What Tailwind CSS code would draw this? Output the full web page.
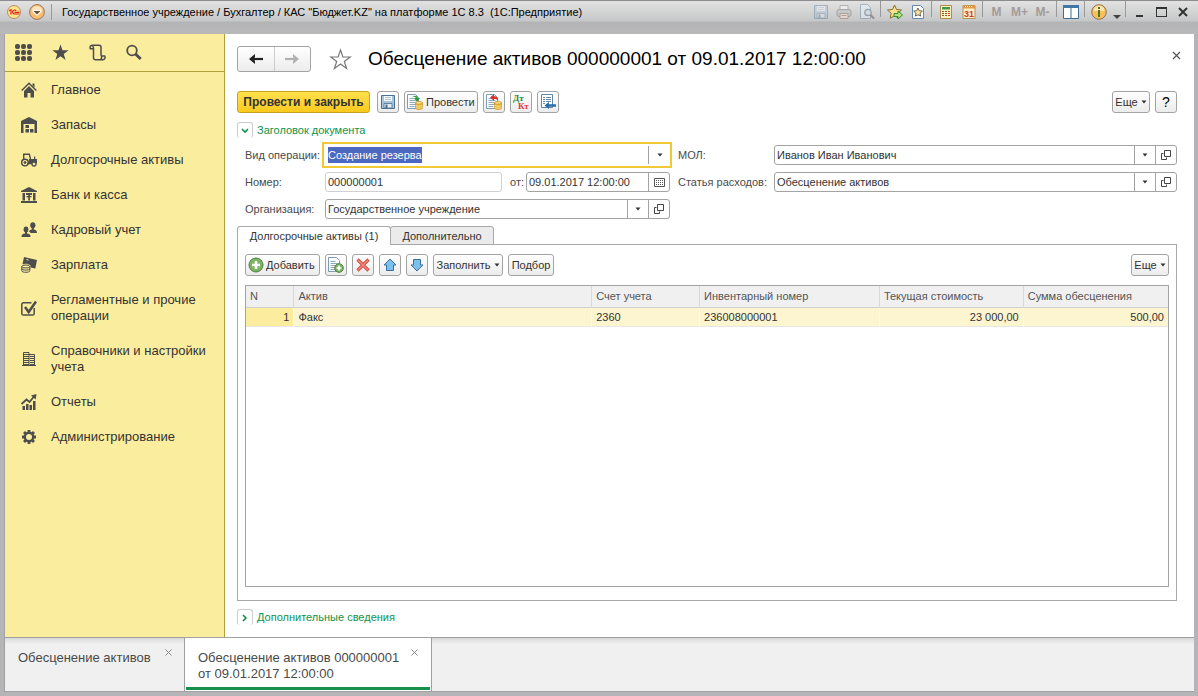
<!DOCTYPE html>
<html lang="ru">
  <head>
    <meta charset="UTF-8" />
    <meta name="viewport" content="width=device-width, initial-scale=1.0" />
    <title>Обесценение активов</title>
    <script src="https://cdn.jsdelivr.net/npm/@tailwindcss/browser@4"></script>
  </head>
  <body
    class="h-screen flex flex-col bg-[#b5b5b7] px-1 pb-1 font-['Liberation_Sans',Arial,sans-serif] text-[11px] leading-4 text-[#333] overflow-hidden"
  >
    <!-- Shared icons -->
    <svg class="hidden">
      <symbol id="down" viewBox="0 0 6 4"><path d="M0.500 0.500h5L3 3.500z" fill="#333" /></symbol>
      <symbol id="open" viewBox="0 0 10 10">
        <path d="M3.500 0.500h6v6h-6zM2.500 3.500h-2v6h5v-2" fill="none" stroke="#444" />
      </symbol>
      <symbol id="coins" viewBox="0 0 8 9">
        <path d="M0.500 1.800v5.400c0 1.600 7 1.600 7 0V1.800z" fill="#e9b63a" stroke="#c68f1c" stroke-width=".7" />
        <ellipse cx="4" cy="1.800" rx="3.500" ry="1.400" fill="#fbe08a" stroke="#c68f1c" stroke-width=".7" />
        <path d="M0.500 4c0 1.600 7 1.600 7 0M0.500 6c0 1.600 7 1.600 7 0" fill="none" stroke="#fff0b0" stroke-width=".7" />
      </symbol>
      <symbol id="sheet" viewBox="0 0 12 15">
        <path d="M0.500 0.500h8l3 3v11h-11z" fill="#fff" stroke="#7d9cb5" />
        <path d="M2.500 4.500h5M2.500 6.500h7M2.500 8.500h7M2.500 10.500h7M2.500 12.500h5" stroke="#8fa9bd" />
      </symbol>
      <symbol id="disk" viewBox="0 0 16 16">
        <path d="M1.500 1.500h13v13h-13z" fill="#a9c4d9" stroke="#4b7191" />
        <path d="M4 2h8v5H4z" fill="#f4f8fb" />
        <path d="M5 3.500h6M5 5.500h6" stroke="#b4c6d4" />
        <path d="M4 9.500h8V14H4z" fill="#e6edf2" stroke="#4b7191" stroke-width=".8" />
        <path d="M5.500 10.500h2V14h-2z" fill="#4b7191" />
      </symbol>
    </svg>

    <!-- Title bar -->
    <header
      class="-mx-1 h-[34px] shrink-0 border-t border-[#8c8c8e] bg-[linear-gradient(#e2e2e2_0px,#c6c7c8_20px,#b3b4b6_21px,#b9b9bb_34px)] px-1 text-black"
    >
      <div class="flex h-[22px] items-center">
        <button aria-label="1С" class="ml-[3px]">
          <svg width="14" height="14" viewBox="0 0 14 14">
            <circle cx="7" cy="7" r="6.500" fill="#fde48a" stroke="#b98e6c" />
            <path d="M2 5.800L4 4.800V9.500M9.200 5.800a2 2 0 1 0 -1.700 3.200h5M7.500 7.300h5" fill="none" stroke="#d8221c" stroke-width="1.200" />
          </svg>
        </button>
        <button aria-label="Главное меню" class="ml-2">
          <svg width="16" height="16" viewBox="0 0 16 16">
            <circle cx="8" cy="8" r="7.400" fill="#f8bf71" stroke="#97775a" />
            <path d="M2.500 6a5.800 5.800 0 0 1 11 0z" fill="#fde3b8" />
            <path d="M3.500 6h9v2L8 11.800 3.500 8z" fill="#fff" />
            <path d="M4.500 7h7L8 10.500z" fill="#6b4c30" />
          </svg>
        </button>
        <span class="ml-[6px] h-4 w-px bg-[#999]"></span>
        <h2 class="ml-[10px] flex-1 whitespace-nowrap">
          Государственное учреждение / Бухгалтер / КАС "Бюджет.KZ" на платформе 1С 8.3&nbsp; (1С:Предприятие)
        </h2>

        <div class="flex h-full items-center">
          <button aria-label="Сохранить" class="flex w-[23px] justify-center opacity-40">
            <svg width="16" height="16"><use href="#disk" /></svg>
          </button>
          <button aria-label="Печать" class="flex w-[23px] justify-center opacity-50">
            <svg width="16" height="16" viewBox="0 0 16 16">
              <path d="M4 1.500h8v5H4z" fill="#fff" stroke="#888" />
              <rect x="1" y="5.500" width="14" height="7" rx="2" fill="#bbb" stroke="#777" />
              <path d="M4 9.500h8v5H4z" fill="#f3e5d8" stroke="#98705a" />
              <path d="M5.500 11.500h5" stroke="#98705a" />
            </svg>
          </button>
          <button aria-label="Предварительный просмотр" class="flex w-[23px] justify-center opacity-50">
            <svg width="16" height="16" viewBox="0 0 16 16">
              <path d="M1.500 0.500h7l3 3v11h-10z" fill="#eef3f7" stroke="#6d8ea8" />
              <circle cx="9" cy="8.500" r="3.200" fill="#cfe1ef" stroke="#5b7288" stroke-width="1.300" />
              <path d="M11.500 11l3.500 3.500" stroke="#6b4c40" stroke-width="2" />
            </svg>
          </button>
          <span class="mx-[2px] h-4 w-px self-start bg-[#999]"></span>
          <button aria-label="Добавить в избранное" class="flex w-[23px] justify-center">
            <svg width="16" height="16" viewBox="0 0 16 16">
              <path d="M7.500 1l2 4.500 5 .5-3.700 3.300 1 4.900-4.300-2.500-4.300 2.500 1-4.900L.5 6l5-.5z" fill="#f8e08c" stroke="#8a6d2e" />
              <path d="M7 9.500h4V7l4.500 4-4.500 4v-2.500H7z" fill="#b9e07f" stroke="#2f8f2a" />
            </svg>
          </button>
          <button aria-label="Избранное" class="flex w-[23px] justify-center">
            <svg width="14" height="16" viewBox="0 0 14 16">
              <path d="M1.500 1.500h8l3 3v10h-11z" fill="#fff" stroke="#6489a8" />
              <path d="M7 4l1.300 2.700 3 .4-2.200 2 .5 3L7 10.700l-2.600 1.400.5-3-2.200-2 3-.4z" fill="#fbe39b" stroke="#444" stroke-width=".8" />
            </svg>
          </button>
          <span class="mx-[2px] h-4 w-px self-start bg-[#999]"></span>
          <button aria-label="Калькулятор" class="flex w-[23px] justify-center">
            <svg width="14" height="16" viewBox="0 0 14 16">
              <path d="M1.500 1.500h11v13h-11z" fill="#fdf3c4" stroke="#b08b4a" />
              <path d="M3 3h8v2.500H3z" fill="#3f9a4c" />
              <path d="M3 7.500h8M3 9.500h8M3 11.500h8" stroke="#8a5a3a" stroke-dasharray="2 1" />
              <path d="M9 7.500h2M9 9.500h2M9 11.500h2" stroke="#d23c22" />
            </svg>
          </button>
          <button aria-label="Календарь" class="flex w-[23px] justify-center">
            <svg width="14" height="16" viewBox="0 0 14 16">
              <path d="M1 1.500h12v13H1z" fill="#fdf0c6" stroke="#b3915a" />
              <path d="M1 1.500h12v3H1z" fill="#e29a4a" />
              <path d="M3 2.500h8" stroke="#fff" stroke-dasharray="1 1" />
              <text x="7" y="13" text-anchor="middle" font-size="9" font-weight="bold" fill="#d23c22">31</text>
            </svg>
          </button>
          <span class="mx-[2px] h-4 w-px self-start bg-[#999]"></span>
          <button class="w-[23px] text-center text-xs font-bold text-[#a39c99]">M</button>
          <button class="w-[23px] text-center text-xs font-bold text-[#a39c99]">M+</button>
          <button class="w-[23px] text-center text-xs font-bold text-[#a39c99]">M-</button>
          <span class="mx-[2px] h-4 w-px self-start bg-[#999]"></span>
          <button aria-label="Панели" class="flex w-[23px] justify-center">
            <svg width="16" height="14" viewBox="0 0 16 14">
              <path d="M0.500 0.500h15v13H0.500z" fill="#fff" stroke="#3f6f96" />
              <path d="M0 0h16v3H0z" fill="#3f78a8" />
              <path d="M8 3v10" stroke="#3f6f96" />
            </svg>
          </button>
          <span class="mx-[2px] h-4 w-px self-start bg-[#999]"></span>
          <button aria-label="Справка" class="flex w-[23px] justify-center">
            <svg width="16" height="16" viewBox="0 0 16 16">
              <circle cx="8" cy="8" r="7.300" fill="#f9bf5c" stroke="#8c7350" />
              <path d="M2.500 7a5.500 5.500 0 0 1 11 0z" fill="#fde3b0" />
              <path d="M7 3h2v2H7zM7 6h2v7H7z" fill="#4c7a24" />
            </svg>
          </button>
          <button aria-label="Ещё" class="flex h-full w-[13px] items-end justify-center pb-1">
            <svg width="8" height="4" viewBox="0 0 8 4"><path d="M0 0h8L4 4z" fill="#444" /></svg>
          </button>
          <span class="mx-[2px] h-4 w-px self-start bg-[#999]"></span>
          <button aria-label="Свернуть" class="flex h-full w-[22px] items-end justify-center pb-[6px]">
            <span class="h-[2px] w-[7px] bg-[#333]"></span>
          </button>
          <button aria-label="Развернуть" class="flex w-[22px] justify-center">
            <span class="h-[10px] w-[11px] border border-t-2 border-[#333]"></span>
          </button>
          <button aria-label="Закрыть" class="flex w-[22px] justify-center">
            <svg width="10" height="10" viewBox="0 0 10 10"><path d="M1 1l8 8M9 1l-8 8" stroke="#333" stroke-width="2" /></svg>
          </button>
        </div>
      </div>
    </header>

    <div class="flex min-h-0 flex-1 border-l border-[#a3a3a5]">
      <!-- Sections panel -->
      <aside class="w-[220px] shrink-0 border-r border-[#b0a03c] bg-[#fbed9e]">
        <div class="flex h-[38px] items-center gap-5 border-b border-[#b0a03c] pl-[10px]">
          <button aria-label="Меню функций">
            <svg width="17" height="17" viewBox="0 0 17 17" fill="#4d4d4d">
              <rect width="5" height="5" rx="2" /><rect x="6" width="5" height="5" rx="2" /><rect x="12" width="5" height="5" rx="2" />
              <rect y="6" width="5" height="5" rx="2" /><rect x="6" y="6" width="5" height="5" rx="2" /><rect x="12" y="6" width="5" height="5" rx="2" />
              <rect y="12" width="5" height="5" rx="2" /><rect x="6" y="12" width="5" height="5" rx="2" /><rect x="12" y="12" width="5" height="5" rx="2" />
            </svg>
          </button>
          <button aria-label="Избранное">
            <svg width="17" height="17" viewBox="0 0 17 17" fill="#4d4d4d">
              <path d="M8.500 0.500l2 5.700h6.200l-5 3.700 1.900 6.100-5.100-3.700L3.400 16l1.900-6.100-5-3.700h6.200z" />
            </svg>
          </button>
          <button aria-label="История">
            <svg width="17" height="17" viewBox="0 0 17 17" fill="none" stroke="#4d4d4d" stroke-width="1.500">
              <path d="M4.500 4.700H1.300C.5 2 2 1.200 3.500 1.200H10c1.200 0 2 .8 2 2v8.500M3.300 1.500c1.200.8 1.200 2 1.200 3.200V14c0 1 .8 1.700 2 1.700h7.500c1.700 0 2.500-2 1.700-3.700H12.500c.3 1.500.3 3-1 3.700" />
            </svg>
          </button>
          <button aria-label="Поиск">
            <svg width="16" height="17" viewBox="0 0 16 17" fill="none" stroke="#4d4d4d">
              <circle cx="6" cy="6.500" r="4.800" stroke-width="1.800" />
              <path d="M9.500 10l5.200 5" stroke-width="3" />
            </svg>
          </button>
        </div>

        <nav class="flex flex-col gap-px pt-px pl-4 text-[13px] text-[#333]">
          <a href="#" class="flex items-center gap-[14px] py-[9px]">
            <svg class="shrink-0" width="16" height="16" viewBox="0 0 16 16" fill="#4d4d4d">
              <path d="M8 4l5 5v6.500H9.500V11h-3v4.500H3V9zM11.500 1.500h2v4l-2-2z" />
              <path d="M0.700 8.500L8 1.300l7.300 7.200" fill="none" stroke="#4d4d4d" stroke-width="1.500" />
            </svg>
            Главное
          </a>
          <a href="#" class="flex items-center gap-[14px] py-[9px]">
            <svg class="shrink-0" width="16" height="16" viewBox="0 0 16 16" fill="#4d4d4d">
              <path d="M0 4l8-4 8 4v12h-2.500V7h-11v9H0z" />
              <path d="M4.500 8H8v3H4.500zM4.500 12H8v3.500H4.500zM9 12h3.500v3.500H9z" />
            </svg>
            Запасы
          </a>
          <a href="#" class="flex items-center gap-[14px] py-[9px]">
            <svg class="shrink-0" width="16" height="16" viewBox="0 0 16 16" fill="none" stroke="#4d4d4d">
              <path d="M2.700 7V2.200h5.600L9.500 7" stroke-width="1.400" />
              <path d="M8 7h8v4.500H8zM13 4.500h1.200V7H13z" fill="#4d4d4d" stroke="none" />
              <circle cx="4" cy="10.500" r="3.300" stroke-width="1.500" />
              <circle cx="4" cy="10.500" r="1" fill="#4d4d4d" />
              <circle cx="13" cy="12" r="2" fill="#fbed9e" stroke-width="1.300" />
              <path d="M6 11.500h5" stroke-width="1.500" />
            </svg>
            Долгосрочные активы
          </a>
          <a href="#" class="flex items-center gap-[14px] py-[9px]">
            <svg class="shrink-0" width="16" height="16" viewBox="0 0 16 16" fill="#4d4d4d">
              <path d="M0 5V4l8-4 8 4v1zM1.500 6H4v7.500H1.500zM12 6h2.500v7.500H12zM0 14h16v2H0zM5 6h6v2H5zM5.500 9h5v1.300h-5zM7.200 7h1.700v6.500H7.200z" />
            </svg>
            Банк и касса
          </a>
          <a href="#" class="flex items-center gap-[14px] py-[9px]">
            <svg class="shrink-0" width="16" height="16" viewBox="0 0 16 16" fill="#4d4d4d">
              <ellipse cx="5" cy="7.500" rx="2.400" ry="3" /><path d="M4 9h2v2.500c2 0 3.500.8 3.500 3.500h-9c0-2.700 1.500-3.500 3.500-3.500z" />
              <ellipse cx="11.800" cy="3.300" rx="2.600" ry="3.100" /><path d="M10.800 5h2v2.500c2 .3 3.200 1.200 3.200 3.500H9.500c-.5-1-1.300-1.300-1.500-1.500.5-1.300 1.600-1.700 2.800-2z" />
            </svg>
            Кадровый учет
          </a>
          <a href="#" class="flex items-center gap-[14px] py-[9px]">
            <svg class="shrink-0" width="16" height="16" viewBox="0 0 16 16" fill="#4d4d4d">
              <path d="M3 0L16 3l-1.700 8.500L9.500 10.500V8.500C7.500 6.500 4 6.500 1.500 7.300z" />
              <path d="M5.500 2.500l2 .5" stroke="#fbed9e" />
              <ellipse cx="4.800" cy="9.500" rx="4" ry="1.500" fill="#fbed9e" stroke="#4d4d4d" />
              <path d="M.8 9.500v4.300c0 2 8 2 8 0V9.500M.8 11.600c0 2 8 2 8 0" fill="none" stroke="#4d4d4d" />
            </svg>
            Зарплата
          </a>
          <a href="#" class="flex items-center gap-[14px] py-[9px] pr-4">
            <svg class="shrink-0" width="16" height="16" viewBox="0 0 16 16" fill="none" stroke="#4d4d4d">
              <path d="M10.500 2.700h-8c-1 0-1.700.7-1.700 1.700v9c0 1 .7 1.700 1.700 1.700h9c1 0 1.700-.7 1.700-1.700V8" stroke-width="1.500" />
              <path d="M4 7l3.700 5L15 1.500" stroke-width="2.500" />
            </svg>
            Регламентные и прочие операции
          </a>
          <a href="#" class="flex items-center gap-[14px] py-[9px] pr-4">
            <svg class="shrink-0" width="16" height="16" viewBox="0 0 16 16" fill="none" stroke="#4d4d4d">
              <path d="M2.500 15V1.500H8V15M8 3.500h5.500V15M1 14.500h14" />
              <path d="M3 3.500h5M3 5.500h5M3 7.500h5M3 9.500h5M3 11.500h5M3 13.500h5M9 5.500h4M9 7.500h4M9 9.500h4M9 11.500h4M9 13.500h4" stroke-width="1.200" />
            </svg>
            Справочники и настройки учета
          </a>
          <a href="#" class="flex items-center gap-[14px] py-[9px]">
            <svg class="shrink-0" width="16" height="16" viewBox="0 0 16 16" fill="#4d4d4d">
              <path d="M1.500 12H4v4H1.500zM5 10h2.500v6H5zM8.500 11H11v5H8.500zM12 7h2.500v9H12z" />
              <path d="M0.500 10l5-4.500L8.500 8 13 2.500" fill="none" stroke="#4d4d4d" stroke-width="1.800" />
              <path d="M10 1.500L15.500 0 14.700 5.500z" />
            </svg>
            Отчеты
          </a>
          <a href="#" class="flex items-center gap-[14px] py-[9px]">
            <svg class="shrink-0" width="16" height="16" viewBox="0 0 16 16" fill="none" stroke="#4d4d4d">
              <circle cx="8" cy="8" r="4.200" stroke-width="2.400" />
              <path d="M8 1v2.500M8 12.500V15M1 8h2.500M12.500 8H15M3 3l1.800 1.800M11.200 11.200L13 13M13 3l-1.800 1.800M4.800 11.200L3 13" stroke-width="2.800" />
            </svg>
            Администрирование
          </a>
        </nav>
      </aside>

      <!-- Document form -->
      <main class="flex min-w-0 flex-1 flex-col bg-white pt-3 pr-[17px] pb-3 pl-3">
        <div class="flex h-[26px] items-center">
          <div class="flex h-[26px] w-[74px] rounded-[3px] border border-[#a3a3a3] bg-linear-to-b from-white to-[#ececec]">
            <button aria-label="Назад" class="flex flex-1 items-center justify-center border-r border-[#ccc]">
              <svg width="14" height="12" viewBox="0 0 14 12"><path d="M14 6H4" stroke="#222" stroke-width="2.200" /><path d="M0 6l6-5v3L4.500 6 6 8v3z" fill="#222" /></svg>
            </button>
            <button aria-label="Вперед" class="flex flex-1 items-center justify-center">
              <svg width="14" height="12" viewBox="0 0 14 12"><path d="M0 6h10" stroke="#b0b0b0" stroke-width="2.200" /><path d="M14 6L8 1v3l1.500 2L8 8v3z" fill="#b0b0b0" /></svg>
            </button>
          </div>
          <button aria-label="В избранное" class="ml-[18px]">
            <svg width="23" height="22" viewBox="0 0 23 22"><path d="M11.500 2l2.400 7h7.400l-6 4.400 2.300 7.100-6.100-4.400-6.100 4.400 2.300-7.100-6-4.400h7.400z" fill="#fff" stroke="#777" stroke-width="1.200" /></svg>
          </button>
          <h1 class="ml-4 flex-1 text-[19px] leading-6 whitespace-nowrap text-black">Обесценение активов 000000001 от 09.01.2017 12:00:00</h1>
          <button aria-label="Закрыть" class="-mr-1 mb-2">
            <svg width="9" height="9" viewBox="0 0 9 9"><path d="M1 1l7 7M8 1L1 8" stroke="#555" stroke-width="1.200" /></svg>
          </button>
        </div>

        <!-- Commands -->
        <div class="mt-[19px] flex gap-[5px]">
          <button class="mr-[2px] h-[22px] w-[133px] rounded-[3px] border border-[#c5a31c] bg-linear-to-b from-[#ffe14a] to-[#fbc91c] text-xs font-bold whitespace-nowrap">Провести и закрыть</button>
          <button aria-label="Записать" class="flex h-[22px] w-[22px] items-center justify-center rounded-[3px] border border-[#a3a3a3] bg-linear-to-b from-white to-[#ececec]">
            <svg width="16" height="16"><use href="#disk" /></svg>
          </button>
          <button class="flex h-[22px] w-[74px] items-center gap-[3px] rounded-[3px] border border-[#a3a3a3] bg-linear-to-b from-white to-[#ececec] pl-[2px]">
            <svg width="16" height="16" viewBox="0 0 16 16">
              <use href="#sheet" width="12" height="15" />
              <path d="M5 3.500c2-2.500 5-2 6 .5h2L10 8 7 4h2c-1-1.300-2.500-1.500-4-.5z" fill="#2f9a38" />
              <use href="#coins" x="8" y="7" width="8" height="9" />
            </svg>
            Провести
          </button>
          <button aria-label="Отмена проведения" class="flex h-[22px] w-[22px] items-center justify-center rounded-[3px] border border-[#a3a3a3] bg-linear-to-b from-white to-[#ececec]">
            <svg width="16" height="16" viewBox="0 0 16 16">
              <use href="#sheet" width="12" height="15" />
              <path d="M4 3.500L8 0v2.300c3 0 4.500 1.700 4 5.200C11.500 5.500 10.500 5 8 5v2z" fill="#d9342b" />
              <use href="#coins" x="8" y="7" width="8" height="9" />
            </svg>
          </button>
          <button aria-label="Движения документа" class="flex h-[22px] w-[22px] items-center justify-center rounded-[3px] border border-[#a3a3a3] bg-linear-to-b from-white to-[#ececec]">
            <svg width="18" height="18" viewBox="0 0 18 18" font-family="Liberation Serif" font-weight="bold" font-size="9">
              <text x="1" y="8" fill="#1f8a35">Дт</text>
              <text x="6" y="16" fill="#e03a35">Кт</text>
            </svg>
          </button>
          <button aria-label="Перейти" class="flex h-[22px] w-[22px] items-center justify-center rounded-[3px] border border-[#a3a3a3] bg-linear-to-b from-white to-[#ececec]">
            <svg width="16" height="16" viewBox="0 0 16 16">
              <path d="M1.500 0.500h11v13h-11z" fill="#fff" stroke="#5f87a8" />
              <path d="M3 3.500h2M6 3.500h5M3 5.500h2M6 5.500h5M3 7.500h2M6 7.500h5M3 9.500h2" stroke="#6b8aa3" />
              <path d="M4.500 11.500L9 8v2.300h7v2.400H9V15z" fill="#2a6ca5" />
            </svg>
          </button>
          <button class="ml-auto flex h-[22px] w-[38px] items-center justify-center gap-[3px] rounded-[3px] border border-[#a3a3a3] bg-linear-to-b from-white to-[#ececec]">
            Еще <svg width="6" height="4"><use href="#down" /></svg>
          </button>
          <button class="h-[22px] w-[22px] rounded-[3px] border border-[#a3a3a3] bg-linear-to-b from-white to-[#ececec] text-sm text-black">?</button>
        </div>

        <button class="mt-[9px] flex items-center gap-1 self-start text-[#109249]" aria-expanded="true">
          <span class="flex h-4 w-4 items-center justify-center rounded-[3px] border border-b-0 border-[#ccc]">
            <svg width="8" height="6" viewBox="0 0 8 6" fill="none" stroke="#109249" stroke-width="1.600"><path d="M1 1l3 3 3-3" /></svg>
          </span>
          Заголовок документа
        </button>

        <!-- Header fields -->
        <form class="mt-[7px] grid grid-cols-[424fr_499fr] gap-x-2 gap-y-[7px] pl-2 text-[#4a4a4a]">
          <div class="flex h-5 items-center">
            <label for="operation" class="w-20 shrink-0 whitespace-nowrap">Вид операции:</label>
            <div class="-my-[3px] -mr-[3px] -ml-[3px] flex h-[26px] w-[350px] border-2 border-[#f0ca35] py-[2px] pl-1">
              <input id="operation" type="text" value="Создание резерва" class="min-w-0 flex-1 self-center text-[#333] outline-none selection:bg-[#4c68c0] selection:text-white" />
              <button type="button" aria-label="Выбрать" class="flex w-[22px] items-center justify-center border-l border-[#a3a3a3]"><svg width="6" height="4"><use href="#down" /></svg></button>
            </div>
          </div>
          <div class="flex h-5 items-center">
            <label for="mol" class="w-24 shrink-0">МОЛ:</label>
            <div class="flex h-5 flex-1 rounded-[3px] border border-[#a3a3a3]">
              <input id="mol" type="text" value="Иванов Иван Иванович" class="min-w-0 flex-1 px-[2px] text-[#333] outline-none" />
              <button type="button" aria-label="Выбрать" class="flex w-[21px] items-center justify-center border-l border-[#a3a3a3]"><svg width="6" height="4"><use href="#down" /></svg></button>
              <button type="button" aria-label="Открыть" class="flex w-[21px] items-center justify-center border-l border-[#a3a3a3]"><svg width="10" height="10"><use href="#open" /></svg></button>
            </div>
          </div>
          <div class="flex h-5 items-center">
            <label for="number" class="w-20 shrink-0">Номер:</label>
            <input id="number" type="text" value="000000001" class="h-5 w-[177px] rounded-[3px] border border-[#d0d0d0] px-[2px] text-[#333] outline-none" />
            <label for="date" class="w-6 pl-2">от:</label>
            <div class="flex h-5 w-[144px] rounded-[3px] border border-[#a3a3a3]">
              <input id="date" type="text" value="09.01.2017 12:00:00" class="min-w-0 flex-1 px-[2px] text-[#333] outline-none" />
              <button type="button" aria-label="Календарь" class="flex w-[21px] items-center justify-center border-l border-[#a3a3a3]">
                <svg width="11" height="9" viewBox="0 0 11 9" fill="none" stroke="#555"><path d="M0.500 0.500h10v8H0.500z" /><path d="M2 2.500h7M2 4.500h7M2 6.500h7" stroke-dasharray="1 1" /></svg>
              </button>
            </div>
          </div>
          <div class="flex h-5 items-center">
            <label for="expense" class="w-24 shrink-0 whitespace-nowrap">Статья расходов:</label>
            <div class="flex h-5 flex-1 rounded-[3px] border border-[#a3a3a3]">
              <input id="expense" type="text" value="Обесценение активов" class="min-w-0 flex-1 px-[2px] text-[#333] outline-none" />
              <button type="button" aria-label="Выбрать" class="flex w-[21px] items-center justify-center border-l border-[#a3a3a3]"><svg width="6" height="4"><use href="#down" /></svg></button>
              <button type="button" aria-label="Открыть" class="flex w-[21px] items-center justify-center border-l border-[#a3a3a3]"><svg width="10" height="10"><use href="#open" /></svg></button>
            </div>
          </div>
          <div class="flex h-5 items-center">
            <label for="organization" class="w-20 shrink-0">Организация:</label>
            <div class="flex h-5 w-[345px] rounded-[3px] border border-[#a3a3a3]">
              <input id="organization" type="text" value="Государственное учреждение" class="min-w-0 flex-1 px-[2px] text-[#333] outline-none" />
              <button type="button" aria-label="Выбрать" class="flex w-[21px] items-center justify-center border-l border-[#a3a3a3]"><svg width="6" height="4"><use href="#down" /></svg></button>
              <button type="button" aria-label="Открыть" class="flex w-[21px] items-center justify-center border-l border-[#a3a3a3]"><svg width="10" height="10"><use href="#open" /></svg></button>
            </div>
          </div>
        </form>

        <!-- Tabs -->
        <div class="z-10 mt-[7px] -mb-px flex" role="tablist">
          <button role="tab" aria-selected="true" class="h-[19px] w-[154px] rounded-t-[3px] border border-b-0 border-[#a8a8a8] bg-white">Долгосрочные активы (1)</button>
          <button role="tab" class="-ml-px h-[19px] w-[104px] rounded-t-[3px] border border-[#a8a8a8] bg-[#ebebeb]">Дополнительно</button>
        </div>
        <section class="flex min-h-0 flex-1 flex-col border border-[#a8a8a8] px-[7px] pt-[9px] pb-[13px]">
          <div class="flex gap-[5px]">
            <button class="flex h-[22px] w-[75px] items-center gap-[2px] rounded-[3px] border border-[#a3a3a3] bg-linear-to-b from-white to-[#ececec] pl-[2px]">
              <svg width="16" height="16" viewBox="0 0 16 16"><circle cx="8" cy="8" r="7" fill="#7fb562" stroke="#4f7d45" /><path d="M8 4v8M4 8h8" stroke="#fff" stroke-width="2.500" /></svg>
              Добавить
            </button>
            <button aria-label="Скопировать" class="flex h-[22px] w-[22px] items-center justify-center rounded-[3px] border border-[#a3a3a3] bg-linear-to-b from-white to-[#ececec]">
              <svg width="16" height="16" viewBox="0 0 16 16"><use href="#sheet" width="12" height="15" /><circle cx="11" cy="11" r="4.300" fill="#7fb562" stroke="#4f7d45" /><path d="M11 8.500v5M8.500 11h5" stroke="#fff" stroke-width="1.700" /></svg>
            </button>
            <button aria-label="Удалить" class="flex h-[22px] w-[22px] items-center justify-center rounded-[3px] border border-[#a3a3a3] bg-linear-to-b from-white to-[#ececec]">
              <svg width="14" height="14" viewBox="0 0 14 14" fill="none"><path d="M1.500 1.500l11 11M12.500 1.500l-11 11" stroke="#d0473c" stroke-width="3.200" /><path d="M2 2l10 10M12 2L2 12" stroke="#f08a7e" stroke-width="1.500" /></svg>
            </button>
            <button aria-label="Переместить вверх" class="flex h-[22px] w-[22px] items-center justify-center rounded-[3px] border border-[#a3a3a3] bg-linear-to-b from-white to-[#ececec]">
              <svg width="14" height="14" viewBox="0 0 14 14"><path d="M7 1l6 6h-2.500v5.500h-7V7H1z" fill="#7cc0ec" stroke="#3a6f9c" /></svg>
            </button>
            <button aria-label="Переместить вниз" class="flex h-[22px] w-[22px] items-center justify-center rounded-[3px] border border-[#a3a3a3] bg-linear-to-b from-white to-[#ececec]">
              <svg width="14" height="14" viewBox="0 0 14 14"><path d="M7 13l6-6h-2.500V1.500h-7V7H1z" fill="#7cc0ec" stroke="#3a6f9c" /></svg>
            </button>
            <button class="flex h-[22px] w-[70px] items-center justify-center gap-[3px] rounded-[3px] border border-[#a3a3a3] bg-linear-to-b from-white to-[#ececec]">
              Заполнить <svg width="6" height="4"><use href="#down" /></svg>
            </button>
            <button class="h-[22px] w-[46px] rounded-[3px] border border-[#a3a3a3] bg-linear-to-b from-white to-[#ececec]">Подбор</button>
            <button class="ml-auto flex h-[22px] w-[38px] items-center justify-center gap-[3px] rounded-[3px] border border-[#a3a3a3] bg-linear-to-b from-white to-[#ececec]">
              Еще <svg width="6" height="4"><use href="#down" /></svg>
            </button>
          </div>

          <div class="mt-[9px] min-h-0 flex-1 border border-[#a3a3a3]">
            <table class="w-full table-fixed">
              <thead>
                <tr class="h-[21px] border-b border-[#d0d0d0] bg-[#f0f0f0] text-left text-[#555]">
                  <th class="w-[5.200%] border-r border-[#d8d8d8] px-1 font-normal">N</th>
                  <th class="w-[32.300%] border-r border-[#d8d8d8] px-1 font-normal">Актив</th>
                  <th class="w-[11.700%] border-r border-[#d8d8d8] px-1 font-normal">Счет учета</th>
                  <th class="w-[19.500%] border-r border-[#d8d8d8] px-1 font-normal">Инвентарный номер</th>
                  <th class="w-[15.600%] border-r border-[#d8d8d8] px-1 font-normal">Текущая стоимость</th>
                  <th class="px-1 font-normal">Сумма обесценения</th>
                </tr>
              </thead>
              <tbody>
                <tr class="h-[19px] border-b border-[#e6e6e6] bg-[#fdf5d0]">
                  <td class="border-r border-white bg-[#fbec9e] px-1 text-right">1</td>
                  <td class="border-r border-[#fefae6] px-1">Факс</td>
                  <td class="border-r border-[#fefae6] px-1">2360</td>
                  <td class="border-r border-[#fefae6] px-1">236008000001</td>
                  <td class="border-r border-[#fefae6] px-1 text-right">23 000,00</td>
                  <td class="px-1 text-right">500,00</td>
                </tr>
              </tbody>
            </table>
          </div>
        </section>

        <button class="mt-2 flex items-center gap-1 self-start text-[#109249]" aria-expanded="false">
          <span class="flex h-4 w-4 items-center justify-center rounded-[3px] border border-b-0 border-[#ccc]">
            <svg width="6" height="8" viewBox="0 0 6 8" fill="none" stroke="#109249" stroke-width="1.600"><path d="M1 1l3 3-3 3" /></svg>
          </span>
          Дополнительные сведения
        </button>
      </main>
    </div>

    <!-- Open windows -->
    <footer class="flex h-[55px] shrink-0 border-y border-l border-[#a0a0a0] bg-[#f0f0f0] text-[13px] text-[#4a4a4a]">
      <div class="flex w-[179px] items-start justify-between bg-[linear-gradient(#d8d8d8,#f0f0f0_6px)] pt-3 pr-3 pl-[13px]">
        <a href="#">Обесценение активов</a>
        <button aria-label="Закрыть вкладку" class="-mt-px"><svg width="7" height="7" viewBox="0 0 7 7"><path d="M.5 .5l6 6M6.500 .5l-6 6" stroke="#888" /></svg></button>
      </div>
      <div class="flex w-[248px] items-start border-x border-[#a0a0a0] bg-white px-px pb-px">
        <div class="flex h-full w-full items-start justify-between border-b-[3px] border-[#159049] pt-3 pr-3 pl-3">
          <a href="#">Обесценение активов 000000001<br />от 09.01.2017 12:00:00</a>
          <button aria-label="Закрыть вкладку" class="-mt-px"><svg width="7" height="7" viewBox="0 0 7 7"><path d="M.5 .5l6 6M6.500 .5l-6 6" stroke="#888" /></svg></button>
        </div>
      </div>
      <div class="flex-1 bg-[linear-gradient(#d8d8d8,#f0f0f0_6px)]"></div>
    </footer>

    <script>
      const operation = document.getElementById("operation");
      operation.focus();
      operation.select();
    </script>
  </body>
</html>
